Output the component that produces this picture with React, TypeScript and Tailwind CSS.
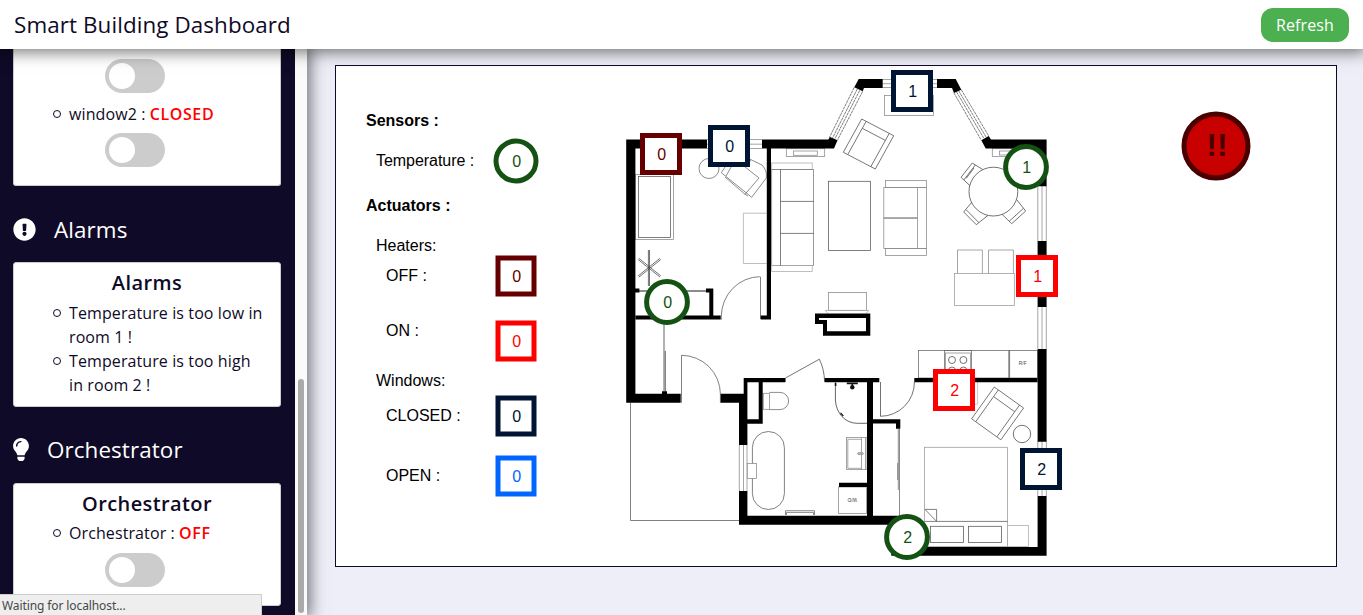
import type { ReactNode } from "react";
import { FaExclamationCircle, FaLightbulb } from "react-icons/fa";

type Shape = "circle" | "square";

const colors = {
  sensor: "#145214",
  heaterOff: "#660000",
  heaterOn: "#ff0000",
  windowClosed: "#001433",
  windowOpen: "#0066ff",
};

function Marker({ shape, color, value, crisp }: { shape: Shape; color: string; value: number; crisp?: boolean }) {
  const size = shape === "circle" ? 46 : 42;
  const c = size / 2;
  const side = crisp ? 37 : 36;
  return (
    <svg width={size} height={size} className="block shrink-0">
      {shape === "circle" ? (
        <circle cx={c} cy={c} r={crisp ? 20.4 : 20} fill="#fff" stroke={color} strokeWidth="5" />
      ) : (
        <rect x={c - side / 2} y={c - side / 2} width={side} height={side} fill="#fff" stroke={color} strokeWidth="5" />
      )}
      <text x={c + 0.6} y={c + 6} textAnchor="middle" fontSize="16" fill={color} className="font-['Liberation_Sans',sans-serif]">
        {value}
      </text>
    </svg>
  );
}

const pins: { shape: Shape; color: string; value: number; place: string }[] = [
  { shape: "square", color: colors.heaterOff, value: 0, place: "left-[304px] top-[67px]" },
  { shape: "square", color: colors.windowClosed, value: 0, place: "left-[372px] top-[59px]" },
  { shape: "square", color: colors.windowClosed, value: 1, place: "left-[555px] top-[4px]" },
  { shape: "square", color: colors.heaterOn, value: 1, place: "left-[680px] top-[189px]" },
  { shape: "square", color: colors.heaterOn, value: 2, place: "left-[597px] top-[303px]" },
  { shape: "square", color: colors.windowClosed, value: 2, place: "left-[684px] top-[382px]" },
  { shape: "circle", color: colors.sensor, value: 0, place: "left-[308px] top-[213px]" },
  { shape: "circle", color: colors.sensor, value: 1, place: "left-[667px] top-[78px]" },
  { shape: "circle", color: colors.sensor, value: 2, place: "left-[548px] top-[448px]" },
];

function Box({ x1, y1, x2, y2, fill = "none", stroke }: { x1: number; y1: number; x2: number; y2: number; fill?: string; stroke?: string }) {
  return <rect x={x1} y={y1} width={x2 - x1} height={y2 - y1} fill={fill} stroke={stroke} />;
}

function Armchair({ matrix }: { matrix: string }) {
  return (
    <g transform={matrix} strokeWidth="0.65">
      <path d="M0 0H36V38H31V8H5V38H0Z M5 0V8 M31 8V0 M5 38H31" />
    </g>
  );
}

function FloorPlan() {
  return (
    <svg width="436" height="500" viewBox="616 66 436 500" className="block">
      <g fill="none" stroke="#888" strokeWidth="0.75">
        {/* window panes */}
        <path d="M707 139.5H762M707 144.2H762M707 148.5H762" />
        <path d="M882.7 79.5H937M882.7 83.7H937M882.7 87.5H937" />
        <path stroke="#555" strokeDasharray="3 0.6" d="M854.3 87.3L829.3 137.7M862.7 91.3L837.3 140.3M857.3 89L832.2 138.6M859.8 90.3L834.5 139.5" />
        <path stroke="#555" strokeDasharray="3 0.6" d="M954 93L981.3 140.3M961.3 89.7L988.7 136M956.6 92L984 138.6M958.8 91L986.3 137.4" />
        <path d="M1037.8 186V241M1042 186V241M1046.3 186V241M1037.8 307V349M1042 307V349M1046.3 307V349M1037.8 441V496M1042 441V496M1046.3 441V496" />
        <path d="M739.3 445V491M743.5 445V491M747 445V491" />
        <path stroke="#555" d="M630.5 402.5V520.5H739" />

        {/* office */}
        <circle cx="709" cy="168.5" r="10" stroke="#666" />
        <g stroke="#666">
          <path d="M735 152L762 165Q767.5 171 766.3 178L751.7 197.3L721.3 172.7L735 152" />
          <path d="M725 177L745 194.3L759 178L740 163" />
          <path d="M745 194.3L748 196M751 161L738 155L726 176" />
        </g>
        <Box x1={635.5} y1={174.5} x2={673.5} y2={239.5} />
        <Box x1={638.5} y1={176.5} x2={670.5} y2={237.5} stroke="#555" />
        <path d="M766.7 213.2H743.4V263.5H766.7" stroke="#aaa" />
        <g stroke="#444">
          <path d="M648.4 250V286M649.5 250V286" />
          <path d="M638 259.5L660 277M638.8 258.3L660.8 275.8M638 276L660 258.3M638.8 277.2L660.8 259.5" />
        </g>
        <path stroke="#666" d="M639 290.5H706M639 291.5H706" />
        <path d="M760.5 319V276.7M759.8 276.7A39 40 0 0 0 721.3 316V319.7" stroke="#555" />
        <path stroke="#333" d="M664 319.7V391.5M665.3 351V391.5" />
        <path stroke="#555" d="M681.5 402.7V355.3A39 39 0 0 1 720.4 394V402.7" />

        {/* living room */}
        <Box x1={786.3} y1={148.7} x2={824.7} y2={156.6} />
        <Box x1={793.5} y1={151} x2={817.3} y2={155.3} />
        <Box x1={771.7} y1={163} x2={812.2} y2={169.4} stroke="#aaa" />
        <Box x1={771.7} y1={169.4} x2={813.6} y2={265.5} stroke="#777" />
        <Box x1={771.7} y1={265.5} x2={812.2} y2={271.6} stroke="#aaa" />
        <path stroke="#555" d="M780.5 169.4V265.5M780.5 201.4H813.6M780.5 233.4H813.6" />
        <Box x1={828.5} y1={181.3} x2={870.5} y2={250.4} stroke="#555" />
        <Box x1={885.4} y1={180.4} x2={926.6} y2={187.4} />
        <Box x1={883.8} y1={187.4} x2={926.6} y2={248.6} />
        <Box x1={885.4} y1={248.6} x2={926.6} y2={255.5} />
        <path d="M917.5 187.4V248.6M883.8 217.6H917.5M883.8 218.5H917.5" />
        <g stroke="#444">
          <Armchair matrix="matrix(.889 .464 -.484 .876 861.7 119)" />
        </g>
        <Box x1={884.5} y1={95.5} x2={933.5} y2={115.4} />
        <Box x1={992.3} y1={148.7} x2={1030.6} y2={156.4} />
        <Box x1={999.5} y1={151} x2={1023} y2={155} />
        <g stroke="#444">
          <circle cx="993.4" cy="191.6" r="24.4" />
          <path d="M982.7 169.5L972.3 163L961 177.3L970 185.7M975.3 165L963.8 180M974 168L966.2 178.4" />
          <path d="M971.7 202.3L963.7 212L976.3 224.7L988 215.3M966 209.6L978.8 222.6" />
          <path d="M1002 214.3L1011.7 223.7L1025.7 211L1016.7 199.7M1009.2 221.3L1023.3 208.5" />
        </g>
        <Box x1={828.5} y1={292.4} x2={866.6} y2={310.4} />
        <path d="M825.4 310.4H869L866 313.3M825.4 310.4L828 313.3" stroke="#aaa" />

        {/* kitchen */}
        <path d="M957.5 273.5V250H982.4V273.5M988.5 273.5V250H1013.4V273.5" />
        <Box x1={954.6} y1={273.6} x2={1014.3} y2={305.4} stroke="#999" />
        <Box x1={918.5} y1={350.5} x2={1037.5} y2={378} stroke="#666" />
        <path stroke="#555" d="M1008.8 350.5V378M1009.6 350.5V378" />
        <Box x1={944.5} y1={350.5} x2={971.5} y2={378} stroke="#666" />
        <Box x1={945.5} y1={353} x2={970.5} y2={378} />
        <g stroke="#444">
          <circle cx="952" cy="360" r="3.5" />
          <circle cx="963.4" cy="360" r="3.5" />
          <circle cx="952" cy="370.5" r="3.5" />
          <circle cx="963.4" cy="370.5" r="3.5" />
        </g>

        {/* bathroom */}
        <path stroke="#444" d="M785.5 382V378L819.3 359.2Q824 368 824.7 382" />
        <Box x1={763.3} y1={393.3} x2={769.4} y2={409.3} />
        <path d="M769.4 392.4H780A8.5 8.5 0 0 1 780 409.6H769.4" stroke="#666" />
        <rect x="752.4" y="431.5" width="32" height="78" rx="16" stroke="#555" />
        <Box x1={747.3} y1={463.6} x2={756.4} y2={478.4} fill="#fff" />
        <path stroke="#333" d="M835.4 382.3V400C836 413 845 423.3 857.3 423.3H867" />
        <path stroke="#111" strokeWidth="1.6" d="M846.8 383.4H857.8M852.3 383V387M835.6 383V386" />
        <path stroke="#111" strokeWidth="1.2" d="M840.5 412.8L843.3 416" />
        <circle cx="852.3" cy="387.2" r="2.2" fill="#111" stroke="none" />
        <Box x1={846.4} y1={437.6} x2={867} y2={469.6} />
        <path d="M861.5 439.3H847.8V468.3H861.5M861.5 437.6V469.6M865.5 437.6V469.6" />
        <ellipse cx="860.5" cy="453.6" rx="3.2" ry="1.1" fill="#bbb" />
        <Box x1={838.4} y1={487} x2={866.4} y2={513.6} />
        <path stroke="#666" d="M785.5 515V510.7H814.5V515M786.5 515V512.4H813.5V515" />

        {/* bedroom */}
        <path stroke="#444" d="M880.5 382V416.3M880.5 416.3A34 34 0 0 0 914.4 382" />
        <path stroke="#666" d="M898.3 429V490M899.5 429V516M897.7 463V480" />
        <path d="M977.6 382V404.2H975" stroke="#bbb" />
        <g stroke="#444">
          <Armchair matrix="matrix(.813 .583 -.597 .837 994.3 387)" />
          <circle cx="1022" cy="434" r="8.7" />
        </g>
        <Box x1={924.6} y1={447.3} x2={1007.6} y2={546.6} stroke="#999" />
        <path stroke="#555" d="M924.6 521.4H1007.6M925 509.4H936.6V521.4L925 509.4" />
        <Box x1={930.6} y1={526.3} x2={963.5} y2={542.5} stroke="#555" />
        <Box x1={968.6} y1={526.3} x2={1001.5} y2={542.5} stroke="#555" />
        <Box x1={1007.6} y1={525.4} x2={1028.5} y2={546.6} stroke="#aaa" />
      </g>

      {/* walls */}
      <g fill="#000">
        <path d="M626.2 139.4H707V148.6H635.4V393.8H680.7V402.8H626.2Z" />
        <path d="M762 139.4H828.3L830 137L837.5 140.3L834 148.6H771V319.6H760.7V315.4H766.8V148.6H762Z" />
        <path d="M858.7 79H882.7V88H864L862.7 91.3L854.3 87.3Z" />
        <path d="M937 79H955.7L961.3 89.7L954 93L952 88H937Z" />
        <path d="M981.3 140.3L988.7 136L991 139.4H1046.6V186.3H1037.6V148.6H985.7Z" />
        <path d="M1037.6 241H1046.6V307H1037.6ZM1037.6 349H1046.6V441.7H1037.6Z" />
        <path d="M1037.6 496H1046.6V555.7H891.3V524.7H739V491H747.4V515.7H867V382.3H824.7V378H879.3V382.3H873V419.3H900.3V428.7H896V423.6H873V515.7H900.3V547H1037.6Z" />
        <path d="M720.7 393.8H743.7V378H785V382.3H762.7V423.7H747.4V445H739V402.8H720.7ZM747.4 382.3V419.3H758.7V382.3Z" fillRule="evenodd" />
        <path d="M635 288.4H639.4V292.6H635ZM635.4 315.4H709.3V292.6H706V288.4H713.3V315.4H720.7V319.6H635.4Z" />
        <path d="M662 391.3H667V394H662ZM914.3 378H1037.6V382.3H914.3ZM839 482.7H867V487H839Z" />
        <path fillRule="evenodd" d="M815 313.4H870.3V335.8H823V324H815ZM819 318V320H827V331.3H866V318Z" />
      </g>
      <g fontSize="4.8" fill="#444" textAnchor="middle" className="font-['Liberation_Sans',sans-serif]">
        <text x="1022.7" y="365">R/F</text>
        <text transform="translate(852.3 498.3) rotate(180)">W/D</text>
      </g>
    </svg>
  );
}

function Legend() {
  return (
    <div className="flex w-[280px] shrink-0 flex-col pt-[45px] text-base leading-5 text-black">
      <div className="pl-[30px] font-bold">Sensors :</div>
      <div className="mt-[7px] flex items-center pl-10">
        <span className="w-[117px] tracking-[-0.05px]">Temperature :</span>
        <Marker shape="circle" color={colors.sensor} value={0} />
      </div>
      <div className="mt-3 pl-[30px] font-bold">Actuators :</div>
      <div className="mt-5 h-[19px] pl-10">Heaters:</div>
      <div className="flex items-center pl-[50px]">
        <span className="w-[109px]">OFF :</span>
        <Marker shape="square" color={colors.heaterOff} value={0} />
      </div>
      <div className="mt-[23px] flex items-start pl-[50px]">
        <span className="w-[109px] pt-px">ON :</span>
        <Marker shape="square" color={colors.heaterOn} value={0} />
      </div>
      <div className="mt-[9px] pl-10">Windows:</div>
      <div className="mt-1 flex items-center pl-[50px]">
        <span className="w-[109px]">CLOSED :</span>
        <Marker shape="square" color={colors.windowClosed} value={0} />
      </div>
      <div className="mt-[18px] flex items-center pl-[50px]">
        <span className="w-[109px]">OPEN :</span>
        <Marker shape="square" color={colors.windowOpen} value={0} />
      </div>
    </div>
  );
}

function Toggle() {
  return (
    <button className="ml-[91px] flex h-[34px] w-[60px] items-center rounded-full bg-[#ccc] px-1" aria-pressed="false">
      <span className="size-[26px] rounded-full bg-white" />
    </button>
  );
}

function Item({ children }: { children: ReactNode }) {
  return (
    <li className="flex pl-[39px] pr-[13px]">
      <span className="mr-[8px] mt-2 size-2 shrink-0 rounded-full border border-[#0f0a27]" />
      <span className="tracking-[0.1px]">{children}</span>
    </li>
  );
}

function Status({ children }: { children: ReactNode }) {
  return <b className="font-semibold tracking-[0.6px] text-[#f00]">{children}</b>;
}

function Section({ icon, title, className }: { icon: ReactNode; title: string; className: string }) {
  return (
    <div className={`flex h-[76px] shrink-0 items-center gap-[18px] text-[22.4px] tracking-[0.1px] text-white ${className}`}>
      {icon}
      <span>{title}</span>
    </div>
  );
}

const card = "shrink-0 rounded-[3px] border border-[#ccc] bg-white";

export default function App() {
  return (
    <div className="relative flex h-[615px] w-[1363px] flex-col overflow-hidden bg-[#eeeef8] font-['Open_Sans',sans-serif] text-base text-[#0f0a27]">
      <header className="z-20 flex h-[49px] shrink-0 items-center justify-between bg-white pl-[14px] pr-[14px] shadow-[0_0_15px_3px_rgba(0,0,0,0.55)]">
        <h1 className="text-[22.4px] tracking-[0.1px]">Smart Building Dashboard</h1>
        <button className="h-[34px] w-[88px] rounded-[12px] bg-[#4caf50] text-base tracking-[0.1px] text-white">Refresh</button>
      </header>
      <div className="flex min-h-0 flex-1">
        <aside className="z-10 flex w-[307px] shrink-0 bg-[#fafafa] shadow-[0_0_15px_3px_rgba(0,0,0,0.55)]">
          <div className="flex w-[295px] flex-col overflow-hidden bg-[#0f0a27] pl-[13px] pr-[14px] leading-6">
            <section className={`${card} h-[137px] rounded-t-none border-t-0 pt-[10px]`}>
              <Toggle />
              <ul className="mb-[7px] mt-[9px]">
                <Item>
                  window2 : <Status>CLOSED</Status>
                </Item>
              </ul>
              <Toggle />
            </section>
            <Section icon={<FaExclamationCircle className="size-[23px]" />} title="Alarms" className="pb-px pt-3" />
            <section className={`${card} h-[145px] pt-[7px]`}>
              <h2 className="text-center text-xl leading-[26px] font-semibold tracking-[0.4px]">Alarms</h2>
              <ul className="mt-[5px]">
                <Item>Temperature is too low in room 1 !</Item>
                <Item>Temperature is too high in room 2 !</Item>
              </ul>
            </section>
            <Section icon={<FaLightbulb className="h-[23px] w-4" />} title="Orchestrator" className="pb-[3px] pt-3" />
            <section className={`${card} h-[123px] pt-[7px]`}>
              <h2 className="text-center text-xl leading-[26px] font-semibold tracking-[0.4px]">Orchestrator</h2>
              <ul className="mb-2 mt-[4px]">
                <Item>
                  Orchestrator : <Status>OFF</Status>
                </Item>
              </ul>
              <Toggle />
            </section>
          </div>
          <div className="flex w-3 flex-col items-center justify-end pb-[2px]">
            <div className="h-[234px] w-[6px] rounded-full bg-[#aaa]" />
          </div>
        </aside>
        <main className="pl-7 pt-4">
          <div className="relative flex h-[502px] w-[1002px] border border-[#0f0a27] bg-white font-['Liberation_Sans',Arial,sans-serif]">
            <Legend />
            <FloorPlan />
            {pins.map((p) => (
              <div key={p.place} className={`absolute ${p.place}`}>
                <Marker shape={p.shape} color={p.color} value={p.value} crisp />
              </div>
            ))}
            <svg width="70" height="70" className="ml-[129px] mt-[45px] shrink-0">
              <circle cx="35" cy="35" r="32" fill="#c80000" stroke="#4b0000" strokeWidth="5" />
              <text x="36" y="45" textAnchor="middle" fontSize="32" fontWeight="bold" fill="#4b0000">
                !!
              </text>
            </svg>
          </div>
        </main>
      </div>
      <div className="absolute bottom-0 left-0 z-30 flex h-[21px] w-[262px] items-center border-r border-t border-[#ccc] bg-[#eee] pl-[2px] pt-px font-['Noto_Sans',sans-serif] text-xs tracking-[-0.1px] text-[#484848]">
        Waiting for localhost...
      </div>
    </div>
  );
}
